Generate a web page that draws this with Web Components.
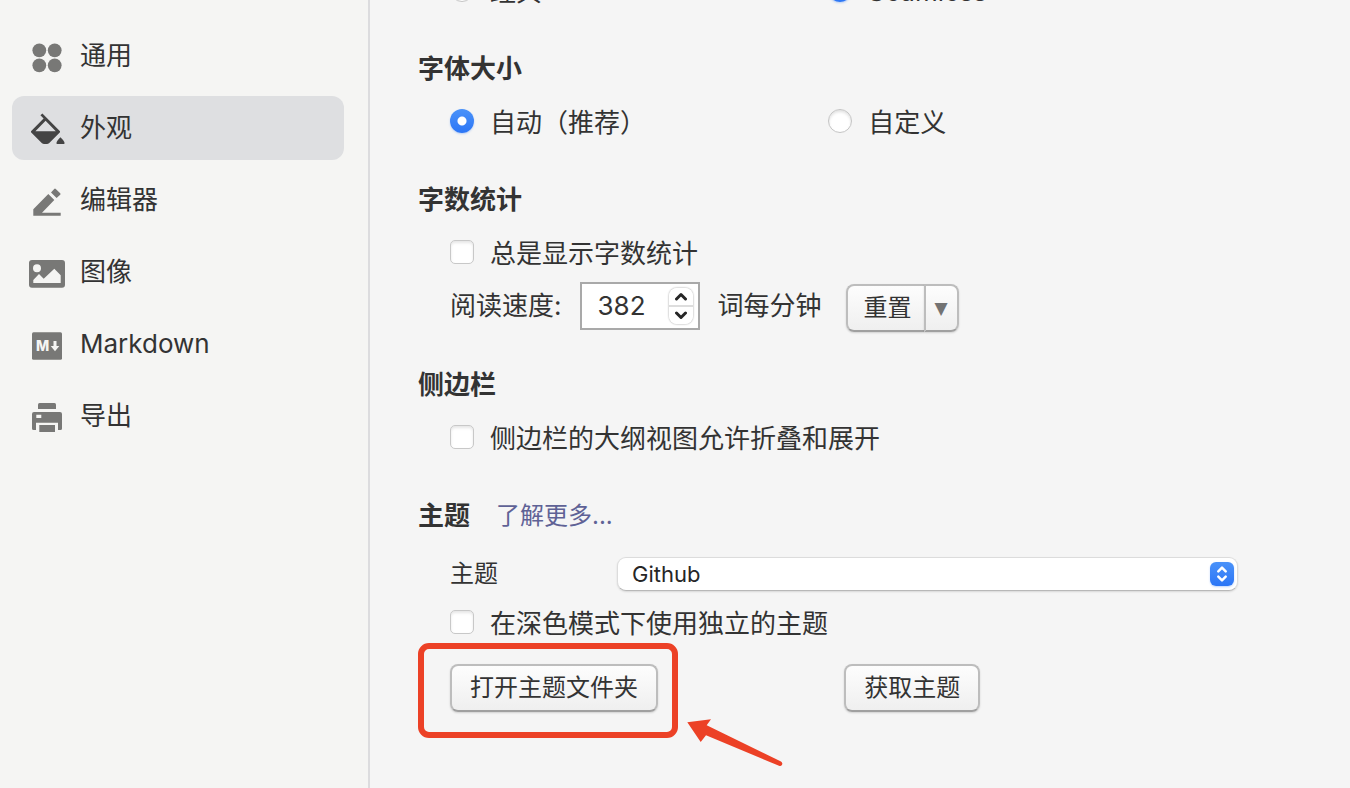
<!DOCTYPE html>
<html lang="zh-CN">
<head>
<meta charset="UTF-8">
<meta name="viewport" content="width=device-width, initial-scale=1.0">
<title>偏好设置</title>
<style>
  body {
    margin: 0;
    background-color: #f5f5f5;
    color: #333333;
    font-family: Inter, "Noto Sans CJK SC", sans-serif;
    font-size: 26px;
    line-height: 32px;
  }
</style>
</head>
<body>
<pref-window>
  <pref-nav slot="nav">
    <nav-item icon="general">通用</nav-item>
    <nav-item icon="appearance" active>外观</nav-item>
    <nav-item icon="editor">编辑器</nav-item>
    <nav-item icon="image">图像</nav-item>
    <nav-item icon="markdown">Markdown</nav-item>
    <nav-item icon="export">导出</nav-item>
  </pref-nav>

  <pref-section>
    <radio-pair name="window-style" first="经典" second="Seamless" selected="second"></radio-pair>
  </pref-section>
  <pref-section heading="字体大小">
    <radio-pair name="font-size" first="自动（推荐）" second="自定义" selected="first"></radio-pair>
  </pref-section>
  <pref-section heading="字数统计">
    <check-option>总是显示字数统计</check-option>
    <reading-speed value="382"></reading-speed>
  </pref-section>
  <pref-section heading="侧边栏">
    <check-option>侧边栏的大纲视图允许折叠和展开</check-option>
  </pref-section>
  <pref-section heading="主题">
    <a slot="link" href="#themes">了解更多...</a>
    <theme-select></theme-select>
    <check-option>在深色模式下使用独立的主题</check-option>
    <theme-actions>
      <call-out><push-button>打开主题文件夹</push-button></call-out>
      <push-button slot="second">获取主题</push-button>
    </theme-actions>
  </pref-section>
</pref-window>

<script>
const icons = {
  general: `
    <circle cx="11.3" cy="13.3" r="6.9"/><circle cx="26.7" cy="13.3" r="6.9"/>
    <circle cx="11.3" cy="28.3" r="6.9"/><circle cx="26.7" cy="28.3" r="6.9"/>`,
  appearance: `
    <path fill-rule="evenodd" d="M12.4 6.3 14.4 4.6 32 22.2 32 23.2 21 34.2Q20 35 19 35H16Q15 35 14 34.2L3 23.2V22.2L15.6 9.6ZM17.6 11.8 7.4 22.2H27.8Z"/>
    <path d="M32.4 28.2Q36.4 32 36.4 33.6V35H28.6V33.6Q28.6 32 32.4 28.2Z"/>`,
  editor: `
    <path d="M5.3 34.7V28.3L20.3 13 26.3 19 14 31.7H32.7V34.7Z"/>
    <path d="M23 11.6 26.2 8Q27 7.2 27.8 8L32.2 12.2Q33 13 32.2 13.8L28.6 17Z"/>`,
  image: `
    <path fill-rule="evenodd" d="M4 7H34Q37 7 37 10V31.7Q37 34.7 34 34.7H4Q1 34.7 1 31.7V10Q1 7 4 7ZM9 11.3A4 4 0 0 0 9 19.3A4 4 0 0 0 9 11.3ZM5.3 30H32.7V22.3L26.3 15.7 15.7 25.8 11 21 5.3 27Z"/>`,
  markdown: `
    <rect x="4" y="7.3" width="30" height="27.4" rx="1.5"/>
    <text x="8" y="26" fill="#f5f5f3" font-size="14" font-weight="800">M</text>
    <path fill="#f5f5f3" d="M25.5 16H28.5V21H31.3L27 26.2 22.7 21H25.5Z"/>`,
  export: `
    <path d="M10 12V7.5Q10 6 11.5 6H26.5Q28 6 28 7.5V12Z"/>
    <path fill-rule="evenodd" d="M6 15H32Q34 15 34 17V31.5Q34 33 32.5 33H30V25.7H8V33H5.5Q4 33 4 31.5V17Q4 15 6 15ZM8.3 17.7V21H13.3V17.7Z"/>
    <rect x="11.3" y="28" width="15.7" height="7"/>`
};

class PrefWindow extends HTMLElement {
  connectedCallback() {
    this.attachShadow({ mode: 'open' });
    this.shadowRoot.innerHTML = `
      <style>
        :host {
          display: grid;
          grid-template-columns: 370px 1fr;
          height: 100vh;
          overflow: hidden;
        }
        main {
          box-sizing: border-box;
          min-width: 0;
          padding: 0 112px 0 48px;
        }
        /* the list is scrolled partway through its first row */
        .scrolled {
          display: flex;
          flex-direction: column;
          gap: 35px;
          margin-top: -34px;
        }
      </style>
      <slot name="nav"></slot>
      <main>
        <div class="scrolled"><slot></slot></div>
      </main>
    `;
  }
}

class PrefNav extends HTMLElement {
  connectedCallback() {
    this.attachShadow({ mode: 'open' });
    this.shadowRoot.innerHTML = `
      <style>
        :host {
          display: block;
          box-sizing: border-box;
          padding: 24px 24px 24px 12px;
          background-color: #f5f5f3;
          border-right: 2px solid #dcdcde;
        }
        nav {
          display: flex;
          flex-direction: column;
          gap: 8px;
        }
      </style>
      <nav><slot></slot></nav>
    `;
  }
}

class NavItem extends HTMLElement {
  connectedCallback() {
    const icon = this.getAttribute('icon');
    this.attachShadow({ mode: 'open' });
    this.shadowRoot.innerHTML = `
      <style>
        :host {
          display: block;
        }
        a {
          display: flex;
          align-items: center;
          gap: 14px;
          height: 64px;
          padding: 0 16px;
          border-radius: 12px;
          color: #333333;
          text-decoration: none;
        }
        svg {
          width: 38px;
          height: 38px;
          fill: #787876;
          flex: none;
        }
        :host([active]) a {
          background-color: #dedfe1;
        }
        :host([active]) svg {
          fill: #444444;
        }
      </style>
      <a href="#${icon}">
        <svg viewBox="0 0 38 38" aria-hidden="true">${icons[icon]}</svg>
        <span><slot></slot></span>
      </a>
    `;
  }
}

class PrefSection extends HTMLElement {
  connectedCallback() {
    const heading = this.getAttribute('heading');
    this.attachShadow({ mode: 'open' });
    this.shadowRoot.innerHTML = `
      <style>
        :host {
          display: block;
        }
        header {
          display: flex;
          align-items: center;
          gap: 26px;
          height: 40px;
          margin-bottom: 8px;
        }
        h2 {
          margin: 0;
          font-size: 26px;
          font-weight: 600;
        }
        ::slotted(a) {
          color: #5f6296;
          font-size: 24px;
          text-decoration: none;
        }
        .rows {
          display: flex;
          flex-direction: column;
          gap: 6px;
          padding-left: 32px;
        }
      </style>
      ${heading ? `<header><h2>${heading}</h2><slot name="link"></slot></header>` : ''}
      <div class="rows"><slot></slot></div>
    `;
  }
}

class RadioPair extends HTMLElement {
  connectedCallback() {
    const name = this.getAttribute('name');
    const selected = this.getAttribute('selected');
    const option = (key) => `
      <label>
        <input type="radio" name="${name}" value="${key}" ${key === selected ? 'checked' : ''}>
        <span>${this.getAttribute(key)}</span>
      </label>`;
    this.attachShadow({ mode: 'open' });
    this.shadowRoot.innerHTML = `
      <style>
        :host {
          display: grid;
          grid-template-columns: 12fr 13fr;
          height: 48px;
        }
        label {
          display: flex;
          align-items: center;
          gap: 16px;
        }
        span {
          padding-top: 4px;
        }
        input {
          appearance: none;
          box-sizing: border-box;
          width: 24px;
          height: 24px;
          margin: 0;
          border: 1px solid #c4c4c4;
          border-radius: 50%;
          background-color: #ffffff;
          box-shadow: inset 0 2px 3px rgba(0, 0, 0, 0.12);
        }
        input:checked {
          border: none;
          background: radial-gradient(circle, #ffffff 4px, transparent 5px), linear-gradient(#4a92f9, #2c76f6);
          box-shadow: 0 1px 2px rgba(44, 118, 246, 0.3);
        }
      </style>
      ${option('first')}
      ${option('second')}
    `;
  }
}

class CheckOption extends HTMLElement {
  connectedCallback() {
    this.attachShadow({ mode: 'open' });
    this.shadowRoot.innerHTML = `
      <style>
        :host {
          display: block;
        }
        label {
          display: flex;
          align-items: center;
          gap: 16px;
          height: 48px;
        }
        span {
          padding-top: 4px;
        }
        input {
          appearance: none;
          box-sizing: border-box;
          width: 24px;
          height: 24px;
          margin: 0;
          border: 1px solid #c8c8c8;
          border-radius: 5px;
          background-color: #ffffff;
          box-shadow: inset 0 2px 3px rgba(0, 0, 0, 0.1);
        }
        input:checked {
          background-color: #2c76f6;
        }
      </style>
      <label><input type="checkbox"><span><slot></slot></span></label>
    `;
  }
}

class ReadingSpeed extends HTMLElement {
  connectedCallback() {
    this.attachShadow({ mode: 'open' });
    this.shadowRoot.innerHTML = `
      <style>
        :host {
          display: flex;
          align-items: center;
          gap: 18px;
          height: 48px;
        }
        .field {
          display: flex;
          align-items: center;
          box-sizing: border-box;
          width: 120px;
          height: 48px;
          padding: 0 5px 0 16px;
          border: 2px solid #a9a9a9;
          background-color: #ffffff;
        }
        input {
          appearance: textfield;
          flex: 1;
          min-width: 0;
          padding: 0;
          border: none;
          outline: none;
          background: none;
          color: inherit;
          font: inherit;
        }
        input::-webkit-inner-spin-button {
          display: none;
        }
        .stepper {
          display: flex;
          flex-direction: column;
          width: 24px;
          height: 36px;
          border-radius: 8px;
          box-shadow: 0 0 2px rgba(0, 0, 0, 0.45);
          overflow: hidden;
        }
        .stepper button {
          flex: 1;
          display: flex;
          align-items: center;
          justify-content: center;
          padding: 0;
          border: none;
          background-color: #ffffff;
        }
        .stepper button + button {
          border-top: 2px solid #dddddd;
        }
        svg {
          fill: none;
          stroke: #262626;
          stroke-width: 3;
          stroke-linecap: round;
          stroke-linejoin: round;
        }
        .split {
          display: flex;
          margin: 4px 0 0 6px;
        }
      </style>
      <label for="speed">阅读速度:</label>
      <div class="field">
        <input id="speed" type="number" value="${this.getAttribute('value')}">
        <div class="stepper">
          <button type="button" id="up" aria-label="增加"><svg width="14" height="9" viewBox="0 0 14 9"><path d="M2.5 7 7 2.5 11.5 7"/></svg></button>
          <button type="button" id="down" aria-label="减少"><svg width="14" height="9" viewBox="0 0 14 9"><path d="M2.5 2 7 6.5 11.5 2"/></svg></button>
        </div>
      </div>
      <span>词每分钟</span>
      <div class="split">
        <push-button part-of="start">重置</push-button>
        <push-button part-of="end" label="更多">▼</push-button>
      </div>
    `;

    const input = this.shadowRoot.querySelector('#speed');
    this.shadowRoot.querySelector('#up').addEventListener('click', () => input.stepUp());
    this.shadowRoot.querySelector('#down').addEventListener('click', () => input.stepDown());
  }
}

class PushButton extends HTMLElement {
  connectedCallback() {
    const label = this.getAttribute('label');
    this.attachShadow({ mode: 'open' });
    this.shadowRoot.innerHTML = `
      <style>
        :host {
          display: inline-block;
          vertical-align: top;
        }
        button {
          display: block;
          box-sizing: border-box;
          height: 48px;
          padding: 0 18px;
          border: 2px solid #bdbdbd;
          border-bottom-color: #a0a0a0;
          border-radius: 8px;
          background: linear-gradient(#fdfdfd, #efefef);
          box-shadow: 0 1px 2px rgba(0, 0, 0, 0.15);
          color: #333333;
          font-family: inherit;
          font-size: 24px;
          line-height: 44px;
          white-space: nowrap;
        }
        :host([part-of="start"]) button {
          padding: 0 12px 0 16px;
          border-right: none;
          border-radius: 8px 0 0 8px;
        }
        :host([part-of="end"]) button {
          padding: 0 9px;
          border-radius: 0 8px 8px 0;
          color: #737373;
          font-family: "DejaVu Sans", sans-serif;
          font-size: 17px;
        }
      </style>
      <button type="button" ${label ? `aria-label="${label}"` : ''}><slot></slot></button>
    `;
  }
}

class ThemeSelect extends HTMLElement {
  connectedCallback() {
    this.attachShadow({ mode: 'open' });
    this.shadowRoot.innerHTML = `
      <style>
        :host {
          display: grid;
          grid-template-columns: 167px 1fr;
          align-items: center;
          height: 36px;
          margin-top: 12px;
        }
        label {
          font-size: 24px;
        }
        .menu {
          position: relative;
        }
        select {
          appearance: none;
          display: block;
          box-sizing: border-box;
          width: 100%;
          height: 34px;
          padding: 0 40px 0 14px;
          border: 1px solid #dcdcdc;
          border-bottom-color: #b8b8b8;
          border-radius: 9px;
          background-color: #ffffff;
          box-shadow: 0 1px 2px rgba(0, 0, 0, 0.12);
          color: #262626;
          font-family: inherit;
          font-size: 22px;
        }
        svg {
          position: absolute;
          top: 5px;
          right: 4px;
          border-radius: 6px;
          background: linear-gradient(#4a92f9, #2c76f6);
          box-shadow: 0 1px 2px rgba(44, 118, 246, 0.3);
          pointer-events: none;
        }
      </style>
      <label for="theme">主题</label>
      <div class="menu">
        <select id="theme">
          <option>Github</option>
        </select>
        <svg width="24" height="24" viewBox="0 0 24 24" fill="none" stroke="#ffffff" stroke-width="2.5" stroke-linecap="round" stroke-linejoin="round" aria-hidden="true">
          <path d="M8.3 9.3 12 5.6 15.7 9.3M8.3 14.7 12 18.4 15.7 14.7"/>
        </svg>
      </div>
    `;
  }
}

class ThemeActions extends HTMLElement {
  connectedCallback() {
    this.attachShadow({ mode: 'open' });
    this.shadowRoot.innerHTML = `
      <style>
        :host {
          display: grid;
          grid-template-columns: 12fr 13fr;
          justify-items: start;
          margin-top: 12px;
        }
        ::slotted([slot="second"]) {
          margin-left: 16px;
        }
      </style>
      <slot></slot>
      <slot name="second"></slot>
    `;
  }
}

// Red frame and arrow drawn over whatever it wraps
class CallOut extends HTMLElement {
  connectedCallback() {
    this.attachShadow({ mode: 'open' });
    this.shadowRoot.innerHTML = `
      <style>
        :host {
          display: block;
          position: relative;
        }
        .frame {
          position: absolute;
          inset: -21px -20px -26px -32px;
          border: 6px solid #ec4126;
          border-radius: 11px;
          pointer-events: none;
        }
        svg {
          position: absolute;
          top: 100%;
          left: 100%;
          margin: 6px 0 0 28px;
          fill: #ec4126;
          pointer-events: none;
        }
      </style>
      <slot></slot>
      <div class="frame"></div>
      <svg width="98" height="50" viewBox="0 0 98 50" aria-hidden="true">
        <path d="M1.3 4.3 25 1.3 20.7 7.3 95 43.5Q97 45 96 46.8 95 48.6 93 47.8L20 17.3 14.7 24Z"/>
      </svg>
    `;
  }
}

customElements.define('pref-window', PrefWindow);
customElements.define('pref-nav', PrefNav);
customElements.define('nav-item', NavItem);
customElements.define('pref-section', PrefSection);
customElements.define('radio-pair', RadioPair);
customElements.define('check-option', CheckOption);
customElements.define('push-button', PushButton);
customElements.define('reading-speed', ReadingSpeed);
customElements.define('theme-select', ThemeSelect);
customElements.define('theme-actions', ThemeActions);
customElements.define('call-out', CallOut);
</script>
</body>
</html>
